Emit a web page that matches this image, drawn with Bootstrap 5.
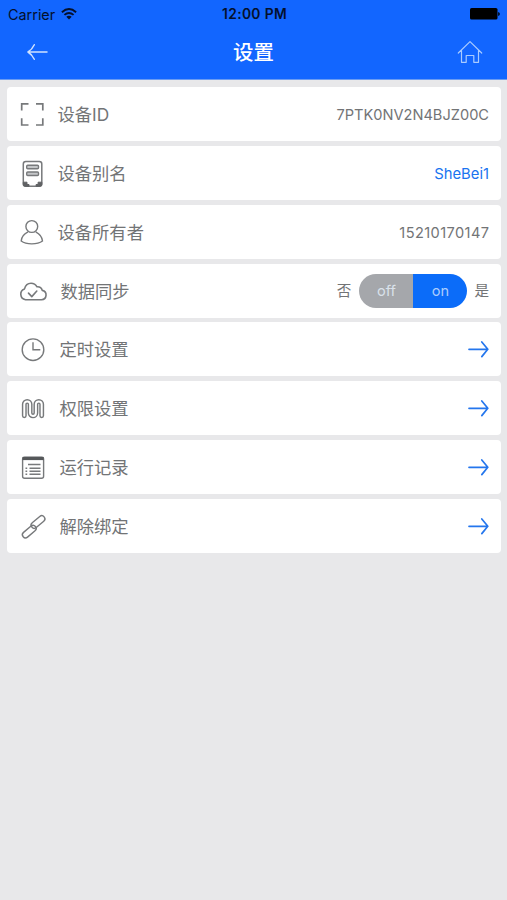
<!DOCTYPE html>
<html lang="zh-CN">
<head>
<meta charset="utf-8">
<meta name="viewport" content="width=device-width, initial-scale=1">
<title>设置</title>
<link href="https://cdn.jsdelivr.net/npm/bootstrap@5.3.0/dist/css/bootstrap.min.css" rel="stylesheet">
<style>
body{background:#e8e8ea;font-family:Inter,"Noto Sans CJK SC",sans-serif;color:#727476;min-height:100vh;overflow:hidden}
.app-top{background:#1266ff;height:79.5px;border-bottom:1px solid #6a9cf2}
.status{height:27px;padding:1px 7px 0 8px;font-size:14.4px;color:#04102c;line-height:27px}
.status .clock{font-weight:600;font-size:13.8px;letter-spacing:.35px;padding-left:1px}
.carrier-wifi{margin-left:6px}
.titlebar{height:50px;padding:0 24px 0 26px}
.titlebar h1{font-size:20.4px;font-weight:500;line-height:50px;padding-right:2px;padding-top:1px}
.side{flex:1 1 0}
.rows{padding:7.800px 6px 0 7px;gap:4.800px}
.setting{height:54px;border-radius:4px;padding:0 12px 0 8px;font-size:17.3px;line-height:54px}
.setting>span{padding-top:1.5px}
.glyph{width:34px;height:54px;flex:none;fill:none;stroke:#77797b;stroke-width:1.4}
.name{margin-left:8.5px}
.name-in{margin-left:10.5px}
.name-sync{margin-left:11.5px}
.setting>.name-sync{padding-top:3px}
.val{font-size:14.6px}
.accent{color:#1a74f0;font-size:14.8px}
.phone{letter-spacing:.4px;margin-right:-.4px}
.go{width:21px;height:18px;fill:none;stroke:#2476ed;stroke-width:1.7;stroke-linecap:round;stroke-linejoin:round}
.toggle{width:108px;height:34px;border-radius:17px;margin:0 7px 0 8px;line-height:35px;font-size:14.6px;color:#d9e1ea}
.toggle .is-off{background:#a5a7ab}
.toggle .is-on{background:#0b6cf9;color:#abcdfd}
</style>
<script src="https://cdn.jsdelivr.net/npm/bootstrap@5.3.0/dist/js/bootstrap.bundle.min.js"></script>
</head>
<body>
<header class="app-top">
  <div class="status d-flex align-items-center">
    <div class="side d-flex align-items-center">
      <span>Carrier</span>
      <svg class="carrier-wifi" width="16" height="12" viewBox="0 0 16 12" fill="none" stroke="#04102c" stroke-width="1.9"><path d="M.9 4.2Q8-2 15.1 4.2M3.4 6.9Q8 3 12.6 6.9"/><path d="M5.3 8.7Q8 6.600 10.700 8.700L8 11.600Z" fill="#04102c" stroke="none"/></svg>
    </div>
    <span class="clock">12:00 PM</span>
    <div class="side d-flex justify-content-end">
      <svg width="30" height="12" viewBox="0 0 30 12"><rect width="27.5" height="11.5" rx="1.6"/><path d="M28.2 4v4q1.600-.4 1.600-2t-1.600-2z"/></svg>
    </div>
  </div>
  <div class="titlebar d-flex align-items-center text-white">
    <div class="side d-flex"><svg width="22" height="18" viewBox="0 0 22 18" fill="none" stroke="#cfe2ff" stroke-width="1.5" stroke-linecap="round" stroke-linejoin="round"><path d="M21 9H2M8.300 1.700Q6 6.500 2 9q4 2.500 6.300 7.300"/></svg></div>
    <h1 class="mb-0">设置</h1>
    <div class="side d-flex justify-content-end"><svg width="26" height="24" viewBox="0 0 26 24" fill="none" stroke="#a9cbff" stroke-width="1.2" stroke-linejoin="round" stroke-linecap="round"><path d="M1.300 13 13 1.600 24.700 13M4.500 10.500V22.300H9.200V15.500H16.800V22.300H21.500V10.500"/></svg></div>
  </div>
</header>
<main class="rows d-flex flex-column">
  <div class="setting bg-white d-flex align-items-center">
    <svg class="glyph" viewBox="0 0 34 54"><path d="M6.700 23.500V16.800H13.500M21 16.800H27.800V23.500M27.800 31.200V38H21M13.500 38H6.700V31.200" stroke-width="1.7"/></svg>
    <span class="name me-auto">设备ID</span><span class="val">7PTK0NV2N4BJZ00C</span>
  </div>
  <div class="setting bg-white d-flex align-items-center">
    <svg class="glyph" viewBox="0 0 34 54"><rect x="8.300" y="15.500" width="18.500" height="24.800" rx="2.500" stroke-width="1.500"/><rect x="11.700" y="19.300" width="11.800" height="3.500" rx="1" fill="#c4c6c8"/><rect x="11.700" y="26" width="11.800" height="3.500" rx="1" fill="#c4c6c8"/><path d="M8.300 36.200h3.700v2.300h2v1.800H10.300q-2 0-2-2zM26.800 36.200h-3.700v2.300h-2v1.800h3.700q2 0 2-2z" fill="#606264" stroke="#606264" stroke-width="1"/></svg>
    <span class="name me-auto">设备别名</span><span class="val accent">SheBei1</span>
  </div>
  <div class="setting bg-white d-flex align-items-center">
    <svg class="glyph" viewBox="0 0 34 54"><circle cx="16.800" cy="21.500" r="5.900"/><path d="M13 26.800Q6.500 30 6.200 36q3.800 2.900 10.600 2.900T27.500 36Q27 30 20.700 26.800"/></svg>
    <span class="name me-auto">设备所有者</span><span class="val phone">15210170147</span>
  </div>
  <div class="setting bg-white d-flex align-items-center">
    <svg class="glyph" viewBox="0 0 34 54" stroke-linecap="round" stroke-linejoin="round"><path d="M10.500 35.700A5.600 5.600 0 0 1 9.500 24.900Q11 19.200 16 19.200 20 19.200 22 22.800 26 22.400 27.300 26.400A4.700 4.700 0 0 1 26.500 35.700ZM13.500 29.100l3.300 3.500 5-5.600" stroke-width="1.600"/></svg>
    <span class="name-sync me-auto">数据同步</span>
    <span class="val">否</span>
    <div class="toggle d-flex overflow-hidden text-center"><span class="is-off w-50">off</span><span class="is-on w-50">on</span></div>
    <span class="val">是</span>
  </div>
  <div class="setting bg-white d-flex align-items-center">
    <svg class="glyph" viewBox="0 0 34 54"><circle cx="18" cy="27.700" r="10.800"/><path d="M18 20.200V27.700H25.300"/></svg>
    <span class="name-in me-auto">定时设置</span><svg class="go" viewBox="0 0 21 18"><path d="M1 9.300H19.800M13.800 2 19.800 9.300 13.800 16.600"/></svg>
  </div>
  <div class="setting bg-white d-flex align-items-center">
    <svg class="glyph" viewBox="0 0 34 54" stroke-linecap="round"><path d="M9.300 34.800V23.300a2.900 2.900 0 0 1 5.800 0V32a2.900 2.900 0 0 0 5.800 0V23.300a2.900 2.900 0 0 1 5.800 0V34.800" stroke-width="4.900"/><path d="M9.300 34.800V23.300a2.900 2.900 0 0 1 5.800 0V32a2.900 2.900 0 0 0 5.800 0V23.300a2.900 2.900 0 0 1 5.800 0V34.800" stroke="#fff" stroke-width="2"/></svg>
    <span class="name-in me-auto">权限设置</span><svg class="go" viewBox="0 0 21 18"><path d="M1 9.300H19.800M13.800 2 19.800 9.300 13.800 16.600"/></svg>
  </div>
  <div class="setting bg-white d-flex align-items-center">
    <svg class="glyph" viewBox="0 0 34 54"><rect x="7.600" y="17.300" width="21" height="21" rx="2"/><path d="M7.500 18.500H28.700" stroke="#55585a" stroke-width="3.200"/><path d="M13 24.500H25.500M14.500 28.200H25.500M14.500 31.200H25.500M14.500 34.200H25.500M10.500 28.200h1.700M10.500 31.200h1.700M10.500 34.200h1.700"/></svg>
    <span class="name-in me-auto">运行记录</span><svg class="go" viewBox="0 0 21 18"><path d="M1 9.300H19.800M13.800 2 19.800 9.300 13.800 16.600"/></svg>
  </div>
  <div class="setting bg-white d-flex align-items-center">
    <svg class="glyph" viewBox="0 0 34 54" stroke-width="1.400"><rect x="-8" y="-3.100" width="16" height="6.200" rx="3.100" transform="translate(14.300 32.600) rotate(-40)"/><rect x="-8" y="-3.100" width="16" height="6.200" rx="3.100" transform="translate(23 23) rotate(-40)"/></svg>
    <span class="name-in me-auto">解除绑定</span><svg class="go" viewBox="0 0 21 18"><path d="M1 9.300H19.800M13.800 2 19.800 9.300 13.800 16.600"/></svg>
  </div>
</main>
</body>
</html>
